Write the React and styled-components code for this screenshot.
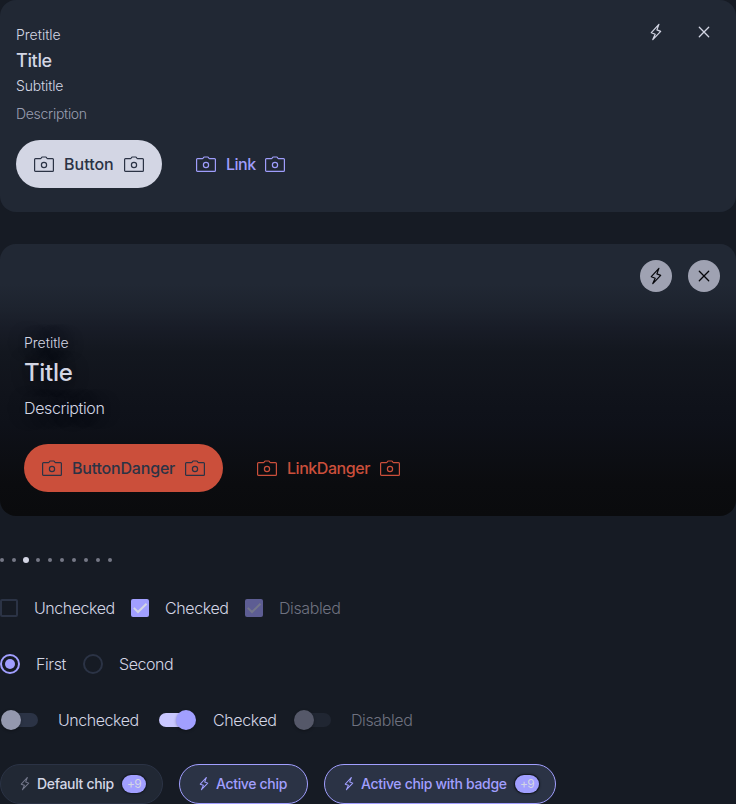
import React from "react";
import styled, { createGlobalStyle, css } from "styled-components";

const GlobalStyle = createGlobalStyle`
  *, *::before, *::after { box-sizing: border-box; }
  html, body { margin: 0; background: #161b24; overflow: hidden; }
  body { font-family: Inter, "Noto Sans", sans-serif; font-weight: 300; color: #d3d6e4; }
`;

const Page = styled.main`
  width: 736px;
  height: 804px;
  display: flex;
  flex-direction: column;
  overflow: hidden;
`;

const Card = styled.section`
  display: flex;
  justify-content: space-between;
  align-items: flex-start;
  height: 212px;
  flex: none;
  padding: 16px;
  border-radius: 16px;
  background: #212834;
`;

const HeroCard = styled(Card)`
  height: 272px;
  margin-top: 32px;
  background: linear-gradient(180deg, #212834 0, #212834 40px, #1d232e 64px, #181c27 84px, #13171f 108px, #10131b 150px, #0e1119 180px, #0b0c0f 240px, #0a0b0d 100%);
`;

const CardBody = styled.div`
  display: flex;
  flex-direction: column;
  padding-top: 8px;
`;

const HeroBody = styled.div`
  display: flex;
  flex-direction: column;
  padding: 72px 0 0 8px;
`;

const Text = styled.span`
  display: block;
  white-space: nowrap;
  font-size: ${(p) => p.$size || 14}px;
  line-height: ${(p) => p.$line || 20}px;
  font-weight: ${(p) => p.$weight || 300};
  letter-spacing: ${(p) => p.$track || 0}px;
  margin-top: ${(p) => p.$top || 0}px;
  ${(p) => p.$muted && css`color: #9a9eb1;`}
  ${(p) => p.$shadow && css`text-shadow: 0 0 16px rgba(10, 11, 13, 0.8);`}
`;

const Actions = styled.div`
  display: flex;
  gap: 16px;
  margin-top: ${(p) => p.$top}px;
`;

const tones = {
  primary: css`background: #d3d6e4; color: #2b3345;`,
  link: css`color: #9f9dfb;`,
  danger: css`background: #cb4f3b; color: #2b3345;`,
  linkDanger: css`color: #cb4f3b;`,
};

const Button = styled.button`
  display: flex;
  align-items: center;
  gap: 8px;
  height: 48px;
  padding: 0 16px;
  border: 0;
  border-radius: 24px;
  background: none;
  font: 500 16px/24px Inter, "Noto Sans", sans-serif;
  ${(p) => tones[p.$tone]}
`;

const ButtonLabel = styled.span`
  width: ${(p) => p.$w}px;
  letter-spacing: ${(p) => p.$track || 0}px;
  white-space: nowrap;
  text-align: left;
`;

const IconBar = styled.div`
  display: flex;
  gap: 16px;
`;

const IconButton = styled.button`
  display: flex;
  align-items: center;
  justify-content: center;
  width: 32px;
  height: 32px;
  padding: 0;
  border: 0;
  border-radius: 50%;
  background: ${(p) => (p.$filled ? "#9fa2b2" : "none")};
  color: ${(p) => (p.$filled ? "#05060a" : "#d3d6e4")};
`;

const Icon = styled.svg`
  display: block;
  flex: none;
  fill: none;
  stroke: currentColor;
  stroke-linejoin: round;
  stroke-linecap: round;
`;

const CheckIcon = styled(Icon)`
  stroke-linejoin: miter;
  stroke-linecap: butt;
`;

const Dots = styled.div`
  display: flex;
  align-items: center;
  gap: 8px;
  height: 8px;
  margin-top: 40px;
`;

const Dot = styled.i`
  display: flex;
  flex: none;
  width: 4px;
  height: 4px;
  border-radius: 50%;
  background: #757886;
  ${(p) => p.$active && css`width: 6px; height: 6px; margin: 0 -1px; background: #d3d6e4;`}
`;

const Row = styled.div`
  display: flex;
  align-items: center;
  gap: 16px;
  height: 24px;
  margin-top: 32px;
`;

const Option = styled.label`
  display: flex;
  align-items: center;
  gap: 16px;
`;

const OptionLabel = styled.span`
  width: ${(p) => p.$w}px;
  font-size: 16px;
  line-height: 24px;
  letter-spacing: ${(p) => p.$track || 0}px;
  white-space: nowrap;
  color: ${(p) => (p.$off ? "#6f7280" : "#d3d6e4")};
`;

const Box = styled.span`
  display: flex;
  width: 18px;
  height: 18px;
  border-radius: 2px;
  border: ${(p) => (p.$on ? "0" : "2px solid #2b3345")};
  background: ${(p) => (p.$on ? (p.$off ? "#5d5d93" : "#a19fff") : "none")};
  color: ${(p) => (p.$off ? "#74778a" : "#d3d6e4")};
`;

const Radio = styled.span`
  display: flex;
  align-items: center;
  justify-content: center;
  width: 20px;
  height: 20px;
  border-radius: 50%;
  border: 2px solid ${(p) => (p.$on ? "#a19fff" : "#2b3345")};
  &::after {
    content: "";
    width: 10px;
    height: 10px;
    border-radius: 50%;
    background: ${(p) => (p.$on ? "#a19fff" : "transparent")};
  }
`;

const Track = styled.span`
  display: flex;
  align-items: center;
  justify-content: ${(p) => (p.$on ? "flex-end" : "flex-start")};
  width: 34px;
  height: 14px;
  margin: 0 4px;
  border-radius: 7px;
  background: ${(p) => (p.$on ? "#c9c7ff" : p.$off ? "#202632" : "#2b3345")};
`;

const Thumb = styled.span`
  flex: none;
  width: 20px;
  height: 20px;
  margin: 0 -3px;
  border-radius: 50%;
  background: ${(p) => (p.$on ? "#a19fff" : p.$off ? "#555869" : "#9498ae")};
  box-shadow: 0 1px 3px rgba(0, 0, 0, 0.3);
`;

const Chips = styled.div`
  display: flex;
  gap: 16px;
  margin-top: 32px;
`;

const Chip = styled.div`
  display: flex;
  align-items: center;
  flex: none;
  width: ${(p) => p.$w}px;
  height: 40px;
  padding: 0 16px;
  border-radius: 20px;
  border: 1px solid ${(p) => (p.$active ? "#a19fff" : "#2b3345")};
  background: ${(p) => (p.$active ? "#2b3345" : "#212834")};
  color: ${(p) => (p.$active ? "#a19fff" : "#d3d6e4")};
`;

const ChipIcon = styled.span`
  color: ${(p) => (p.$active ? "#a19fff" : "#74788c")};
  margin-right: 4px;
`;

const ChipLabel = styled.span`
  width: ${(p) => p.$w}px;
  font-size: 14px;
  line-height: 20px;
  font-weight: 500;
  letter-spacing: ${(p) => p.$track || 0}px;
  white-space: nowrap;
`;

const Badge = styled.span`
  width: 24px;
  height: 18px;
  margin-left: 8px;
  border-radius: 9px;
  background: #a19fff;
  color: #d3d6e4;
  box-shadow: 0 0 0 1px #161b24, 0 0 2px 1px #161b24;
  font-size: 12px;
  line-height: 18px;
  font-weight: 400;
  letter-spacing: -0.6px;
  text-align: center;
`;

const Camera = () => (
  <Icon width="24" height="24" viewBox="0 0 24 24" strokeWidth="1.2">
    <path d="M3.5 6.600h5.100c.5 0 .6-.3.8-.8.2-.5.5-.8 1-.8h3.200c.5 0 .8.3 1 .8.2.5.3.8.8.8h5.100c.6 0 .9.3.9.9v10.900c0 .6-.3.9-.9.9h-17c-.6 0-.9-.3-.9-.9V7.500c0-.6.3-.9.9-.9Z" />
    <circle cx="12" cy="13" r="2.6" />
  </Icon>
);

const boltPath = "M14.900 4.400 7.300 12.700l3.900 1.500L8.800 19.600l7.900-8.200-3.800-1.500Z";

const Bolt = () => (
  <Icon width="24" height="24" viewBox="0 0 24 24" strokeWidth="1.2">
    <path d={boltPath} />
  </Icon>
);

const SmallBolt = () => (
  <Icon width="16" height="16" viewBox="2 2.5 20 20" strokeWidth="1.3">
    <path d={boltPath} />
  </Icon>
);

const Close = () => (
  <Icon width="24" height="24" viewBox="0 0 24 24" strokeWidth="1.3">
    <path d="m7.300 7.300 9.400 9.400m0-9.400-9.400 9.400" />
  </Icon>
);

const Check = () => (
  <CheckIcon width="18" height="18" viewBox="0 0 18 18" strokeWidth="2">
    <path d="m2.800 8.900 4.200 4.100 8.500-8.300" />
  </CheckIcon>
);

const ActionButton = ({ tone, w, track, children }) => (
  <Button $tone={tone}>
    <Camera />
    <ButtonLabel $w={w} $track={track}>{children}</ButtonLabel>
    <Camera />
  </Button>
);

const CardIcons = ({ filled }) => (
  <IconBar>
    <IconButton $filled={filled} aria-label="Action"><Bolt /></IconButton>
    <IconButton $filled={filled} aria-label="Close"><Close /></IconButton>
  </IconBar>
);

const Toggle = ({ on, off, w, track, children }) => (
  <Option>
    <Track $on={on} $off={off}><Thumb $on={on} $off={off} /></Track>
    <OptionLabel $w={w} $off={off} $track={track}>{children}</OptionLabel>
  </Option>
);

export default function App() {
  return (
    <>
      <GlobalStyle />
      <Page>
        <Card>
          <CardBody>
            <Text $line={21} $weight={350}>Pretitle</Text>
            <Text $size={18} $line={26} $weight={500} $top={3} $track={-0.35}>Title</Text>
            <Text $top={2} $weight={350} $track={-0.15}>Subtitle</Text>
            <Text $top={8} $weight={350} $track={-0.3} $muted>Description</Text>
            <Actions $top={16}>
              <ActionButton tone="primary" w={50}>Button</ActionButton>
              <ActionButton tone="link" w={29} track={-0.5}>Link</ActionButton>
            </Actions>
          </CardBody>
          <CardIcons />
        </Card>

        <HeroCard>
          <HeroBody>
            <Text $line={21} $weight={350} $shadow>Pretitle</Text>
            <Text $size={24} $line={34} $weight={450} $top={3} $track={-0.3} $shadow>Title</Text>
            <Text $size={16} $line={24} $top={6} $track={-0.38} $shadow>Description</Text>
            <Actions $top={24}>
              <ActionButton tone="danger" w={103} track={-0.2}>ButtonDanger</ActionButton>
              <ActionButton tone="linkDanger" w={83} track={-0.45}>LinkDanger</ActionButton>
            </Actions>
          </HeroBody>
          <CardIcons filled />
        </HeroCard>

        <Dots>
          {Array.from({ length: 10 }, (_, i) => <Dot key={i} $active={i === 2} />)}
        </Dots>

        <Row>
          <Option><Box /><OptionLabel $w={81} $track={-0.45}>Unchecked</OptionLabel></Option>
          <Option><Box $on><Check /></Box><OptionLabel $w={64} $track={-0.4}>Checked</OptionLabel></Option>
          <Option><Box $on $off><Check /></Box><OptionLabel $off $w={62} $track={-0.4}>Disabled</OptionLabel></Option>
        </Row>

        <Row>
          <Option><Radio $on /><OptionLabel $w={31} $track={-0.4}>First</OptionLabel></Option>
          <Option><Radio /><OptionLabel $w={55} $track={-0.45}>Second</OptionLabel></Option>
        </Row>

        <Row>
          <Toggle w={81} track={-0.45}>Unchecked</Toggle>
          <Toggle on w={64} track={-0.4}>Checked</Toggle>
          <Toggle off w={62} track={-0.4}>Disabled</Toggle>
        </Row>

        <Chips>
          <Chip $w={163}>
            <ChipIcon><SmallBolt /></ChipIcon>
            <ChipLabel $w={77} $track={-0.32}>Default chip</ChipLabel>
            <Badge>+9</Badge>
          </Chip>
          <Chip $w={129} $active>
            <ChipIcon $active><SmallBolt /></ChipIcon>
            <ChipLabel $w={71} $track={-0.33}>Active chip</ChipLabel>
          </Chip>
          <Chip $w={232} $active>
            <ChipIcon $active><SmallBolt /></ChipIcon>
            <ChipLabel $w={146} $track={-0.32}>Active chip with badge</ChipLabel>
            <Badge>+9</Badge>
          </Chip>
        </Chips>
      </Page>
    </>
  );
}
